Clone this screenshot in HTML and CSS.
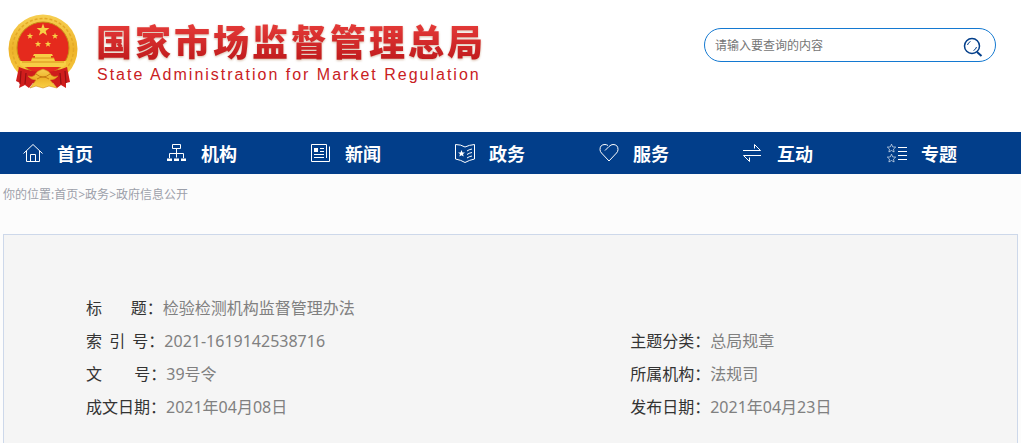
FILE: index.html
```html
<!DOCTYPE html>
<html lang="zh-CN">
<head>
    <meta charset="UTF-8">
    <meta name="viewport" content="width=device-width, initial-scale=1.0">
    <title>国家市场监督管理总局</title>
    <link rel="stylesheet" href="styles.css">
</head>
<body>
    <header class="header">
        <div class="brand">
            <svg class="emblem" viewBox="0 0 70 76" aria-hidden="true">
                <defs>
                    <linearGradient id="gold" x1="0" y1="0" x2="0" y2="1">
                        <stop offset="0" stop-color="#f6cf52"/>
                        <stop offset="0.5" stop-color="#eeb32a"/>
                        <stop offset="1" stop-color="#f9d044"/>
                    </linearGradient>
                    <polygon id="star" points="0,-6 1.5,-1.9 5.8,-1.9 2.4,0.8 3.7,5 0,2.5 -3.7,5 -2.4,0.8 -5.8,-1.9 -1.5,-1.9"/>
                </defs>
                <circle cx="35" cy="35" r="34.5" fill="url(#gold)"/>
                <circle cx="35" cy="35" r="30.5" fill="none" stroke="#e3a826" stroke-width="1.5" stroke-dasharray="3 2"/>
                <circle cx="35" cy="34" r="26" fill="#e52a1d" stroke="#c98a16"/>
                <g fill="#f7ce45">
                    <use href="#star" transform="translate(35 16) scale(1.1)"/>
                    <use href="#star" transform="translate(22 22) scale(.55)"/>
                    <use href="#star" transform="translate(47 22) scale(.55)"/>
                    <use href="#star" transform="translate(30 30) scale(.55)"/>
                    <use href="#star" transform="translate(40 30) scale(.55)"/>
                    <path d="M26 40h18l1 2h-2v2h3l1 3h-24l1-3h3v-2h-2z"/>
                    <path d="M12 47h46v4l-3 2H15l-3-2z"/>
                </g>
                <path d="M24 44h22M14 48h42" stroke="#d9921b" stroke-width="1"/>
                <!-- ribbons and the wheel -->
                <path d="M11 53q12 5 24 5t24-5l3 15-4 1v5l-5-3-4 3-4-5H25l-4 5-4-3-6 3 1-5-4-2z" fill="#cf1d1c"/>
                <path d="M13 57l-1 13M18 59l-1 11M52 59l1 11M57 57l1 12" stroke="#931012" stroke-width="1.2"/>
                <path d="M22 74l6-8q-5 0-8-4 4 2 7-1 1-4 8-6 7 2 8 6 3 3 7 1-3 4-8 4l7 8-8-2-6 2-7-2z" fill="url(#gold)" stroke="#d48917" stroke-width=".6"/>
                <path d="M28 60q7 6 14 0M29 65q6-4 12 0" fill="none" stroke="#c87b12"/>
            </svg>
            <div class="brand-text">
                <h1 class="brand-name">国家市场监督管理总局</h1>
                <p class="brand-sub">State Administration for Market Regulation</p>
            </div>
        </div>
        <form class="search">
            <input class="search-input" type="text" placeholder="请输入要查询的内容" aria-label="请输入要查询的内容">
            <button class="search-btn" type="button" aria-label="搜索">
                <svg width="20" height="20" viewBox="0 0 20 20">
                    <circle cx="9" cy="9" r="7.5"/>
                    <path d="M14 15l4.5 4" stroke-width="2"/>
                    <path d="M4.5 8q.6-2.5 3-3.5M13.5 10q-.6 2.500-3 3.500" stroke-width="1"/>
                </svg>
            </button>
        </form>
    </header>

    <nav class="nav">
        <a class="nav-item" href="#">
            <svg viewBox="0 0 20 20"><path d="M.5 10.500L10 1.500l9.500 9M3.500 8v10.500h13V8M7.500 18.500v-7h5v7"/></svg>首页
        </a>
        <a class="nav-item" href="#">
            <svg viewBox="0 0 20 20"><path d="M5.500 1.500h8v4h-8zM9.500 5.500v9M2.500 15v-4.500h14V15"/><path class="solid" d="M0 15.500h5v2.500H0zM7 15.500h5v2.500H7zM14 15.500h5v2.500h-5z"/></svg>机构
        </a>
        <a class="nav-item" href="#">
            <svg viewBox="0 0 20 20"><path d="M15.500 15V1.500h-15v17h18v-15M9 5.500h4M9 8.500h4M3 11.500h10M3 14.500h10"/><path class="solid" d="M3 5h4v4H3z"/></svg>新闻
        </a>
        <a class="nav-item" href="#">
            <svg viewBox="0 0 20 20"><path d="M.5 1.500Q6 1.500 10 4q4-2 9.500-2.500v14.500q-5 1-9.500 3.500-4-2.500-9.500-3.500zM12 8q2-1.500 5-2M12 11.500q2-1.500 5-2M12 15q2-1.500 5-2"/><path class="solid" d="M6.500 7l1 2.400 2.500.1-2 1.600.7 2.500-2.200-1.400-2.200 1.400.7-2.500-2-1.600 2.500-.1z"/></svg>政务
        </a>
        <a class="nav-item" href="#">
            <svg viewBox="0 0 20 20"><path d="M6 7.500l4-4q2-2 4-2 5 0 5 5 0 2-1.500 3.500L10 18 2.500 10Q1 8.500 1 6.500q0-5 5-5 1.500 0 3 1"/></svg>服务
        </a>
        <a class="nav-item" href="#">
            <svg viewBox="0 0 20 20"><path d="M0 7.500h17.500l-6-6v4M18 12.500H.5l6 6v-4"/></svg>互动
        </a>
        <a class="nav-item" href="#">
            <svg viewBox="0 0 20 20"><path class="thin" d="M4.500 1.200l1.200 2.700 3 .2-2.200 2 .6 2.900-2.600-1.500L1.900 9l.6-2.900-2.200-2 3-.2zM4.500 11.200l1.200 2.700 3 .2-2.200 2 .6 2.900-2.600-1.500L1.900 19l.6-2.900-2.200-2 3-.2z"/><path d="M11 4.500h9M11 8.500h9M11 12.500h9M11 16.500h9"/></svg>专题
        </a>
    </nav>

    <div class="breadcrumb">你的位置:<a href="#">首页</a>&gt;<a href="#">政务</a>&gt;<a href="#">政府信息公开</a></div>

    <main class="panel">
        <dl class="info">
            <div class="row wide"><dt>标&nbsp;&nbsp;&nbsp;&nbsp;&nbsp;&nbsp;&nbsp;&nbsp;题：</dt><dd>检验检测机构监督管理办法</dd></div>
            <div class="row"><dt>索&nbsp;&nbsp;引&nbsp;&nbsp;号：</dt><dd>2021-1619142538716</dd></div>
            <div class="row"><dt>主题分类：</dt><dd>总局规章</dd></div>
            <div class="row"><dt>文&nbsp;&nbsp;&nbsp;&nbsp;&nbsp;&nbsp;&nbsp;&nbsp;&nbsp;号：</dt><dd>39号令</dd></div>
            <div class="row"><dt>所属机构：</dt><dd>法规司</dd></div>
            <div class="row"><dt>成文日期：</dt><dd>2021年04月08日</dd></div>
            <div class="row"><dt>发布日期：</dt><dd>2021年04月23日</dd></div>
        </dl>
    </main>
</body>
</html>
```
FILE: styles.css
```css
:root {
    --blue: #023e8a;
    --border: #cdd8ea;
    --text: #333333;
    --text-light: #808080;
}

* {
    box-sizing: border-box;
}

body {
    display: flex;
    flex-direction: column;
    min-height: 100vh;
    margin: 0;
    font-family: "Noto Sans", "Noto Sans CJK SC", sans-serif;
    background-color: #fcfcfc;
    color: var(--text);
}

a {
    color: inherit;
    text-decoration: none;
}

.header {
    display: flex;
    justify-content: space-between;
    align-items: flex-start;
    height: 132px;
    padding: 14px 25px 0 8px;
    background-color: #ffffff;
}

.brand {
    display: flex;
    gap: 18px;
}

.emblem {
    width: 70px;
    height: 76px;
}

.brand-name {
    margin: 0;
    font-family: "Noto Sans CJK SC", sans-serif;
    font-size: 36px;
    font-weight: 900;
    line-height: 52px;
    letter-spacing: 3px;
    white-space: nowrap;
    color: transparent;
    background: linear-gradient(#e43a38 20%, #c01a1c 90%);
    -webkit-background-clip: text;
    background-clip: text;
    filter: drop-shadow(0 1px 1px rgba(150, 80, 30, 0.4));
}

.brand-sub {
    margin: 0;
    padding-left: 1px;
    font-family: "Liberation Sans", Arial, sans-serif;
    font-size: 16px;
    line-height: 18px;
    letter-spacing: 2px;
    white-space: nowrap;
    color: #c9211e;
}

.search {
    display: flex;
    align-items: center;
    width: 292px;
    height: 34px;
    margin-top: 14px;
    padding: 0 12px 0 10px;
    border: 1px solid #1479d1;
    border-radius: 17px;
}

.search-input {
    flex: 1;
    min-width: 0;
    padding: 0;
    border: 0;
    outline: 0;
    background: none;
    font-family: inherit;
    font-size: 12px;
}

.search-input::placeholder {
    color: #757575;
}

.search-btn {
    display: flex;
    padding: 4px 0 0;
    border: 0;
    background: none;
    cursor: pointer;
}

.search-btn svg {
    fill: none;
    stroke: var(--blue);
    stroke-width: 1.5;
}

.nav {
    display: grid;
    grid-template-columns: repeat(7, 1fr);
    padding-right: 13px;
    background-color: var(--blue);
}

.nav-item {
    display: flex;
    align-items: center;
    gap: 14px;
    height: 42px;
    padding-left: 23px;
    font-family: "Noto Sans CJK SC", sans-serif;
    font-size: 18px;
    font-weight: bold;
    color: #ffffff;
}

.nav-item svg {
    width: 20px;
    height: 20px;
    fill: none;
    stroke: #ffffff;
    stroke-width: 1;
}

.nav-item .solid {
    fill: #ffffff;
    stroke: none;
}

.nav-item .thin {
    stroke-width: 0.6;
}

.breadcrumb {
    padding-left: 3px;
    font-size: 12px;
    line-height: 42px;
    color: #9ca0aa;
}

.panel {
    flex: 1;
    margin: 18px 3px 0;
    padding: 57px 24px 0 82px;
    border: 1px solid var(--border);
    border-bottom: 0;
    background-color: #f5f5f5;
}

.info {
    display: grid;
    grid-template-columns: 3fr 2fr;
    margin: 0;
    font-size: 16px;
    line-height: 33px;
}

.row {
    display: flex;
}

.wide {
    grid-column: 1 / -1;
}

.row dt {
    font-family: "Noto Sans CJK SC", sans-serif;
    line-height: 31px;
    white-space: nowrap;
}

.row dd {
    margin: 0;
    color: var(--text-light);
}
```
